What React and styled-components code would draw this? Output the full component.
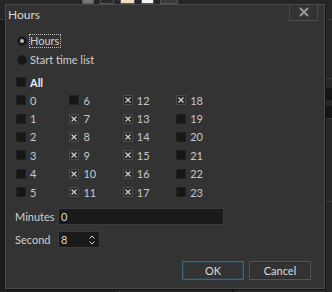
import React from "react";
import styled, { createGlobalStyle } from "styled-components";

const GlobalStyle = createGlobalStyle`
  html, body { margin: 0; padding: 0; background: #1e1e1e; overflow: hidden; }
  * { box-sizing: border-box; }
`;

const FONT = `"Segoe UI", Lato, "Liberation Sans", sans-serif`;

const Screen = styled.div`
  position: relative;
  width: 332px;
  height: 292px;
  background: #1f1f1f;
  overflow: hidden;
  font-family: ${FONT};
  display: flex;
  flex-direction: column;
`;

const Toolbar = styled.div`
  height: 20px;
  display: flex;
  align-items: flex-start;
  gap: 6px;
  padding-left: 82px;
  background: #262626;
  border-bottom: 1px solid #3a3a3a;
`;

const ToolIcon = styled.div`
  width: ${(p) => p.$w}px;
  height: 14px;
  margin-top: -10px;
  background: ${(p) => p.$c};
  border: 1px solid #555;
`;

const AppBody = styled.div`
  flex: 1;
  display: flex;
`;

const LeftPane = styled.div`
  width: 120px;
  background: #1c1c1c;
  border-right: 1px solid #333;
`;

const Spacer = styled.div`
  flex: 1;
  background: #232323;
`;

const RightPane = styled.div`
  width: 100px;
  background: #262626;
  border-left: 2px solid #111;
  display: flex;
  flex-direction: column;
  padding-top: 24px;
  color: #9aa4b0;
  font-size: 11px;
`;

const PaneLine = styled.div`
  height: ${(p) => p.$h}px;
  line-height: ${(p) => p.$h}px;
  background: ${(p) => p.$bg || "transparent"};
  border-top: ${(p) => (p.$line ? "1px solid #3a3a3a" : "none")};
  padding-left: 226px;
  white-space: nowrap;
  overflow: hidden;
`;

const Dialog = styled.div`
  position: absolute;
  left: 5px;
  top: 4px;
  width: 320px;
  height: 285px;
  background: #333333;
  border: 1px solid #4a4a4a;
  box-shadow: 1px 1px 0 #141414;
  display: flex;
  flex-direction: column;
  color: #cfcfcf;
  font-size: 11px;
`;

const TitleBar = styled.div`
  height: 18px;
  display: flex;
  justify-content: space-between;
  align-items: flex-start;
  padding-left: 2px;
`;

const Title = styled.div`
  line-height: 20px;
  font-size: 12px;
  color: #d6d6d6;
`;

const CloseButton = styled.div`
  width: 29px;
  height: 17px;
  margin-top: -1px;
  margin-right: 6px;
  border: 1px solid #4c4c4c;
  border-top: none;
  display: flex;
  align-items: center;
  justify-content: center;
`;

const Content = styled.div`
  flex: 1;
  display: flex;
  flex-direction: column;
  padding-left: 10px;
`;

const RadioGroup = styled.div`
  margin-top: 8px;
  display: flex;
  flex-direction: column;
`;

const RadioRow = styled.div`
  height: 19px;
  display: flex;
  align-items: center;
  padding-left: 1px;
`;

const RadioCircle = styled.div`
  width: 10px;
  height: 10px;
  flex: none;
  border-radius: 50%;
  background: #161616;
  border: 1px solid #222;
  display: flex;
  align-items: center;
  justify-content: center;
  &::after {
    content: "";
    display: ${(p) => (p.$on ? "block" : "none")};
    width: 4px;
    height: 4px;
    border-radius: 50%;
    background: #bcbcbc;
  }
`;

const RadioLabel = styled.span`
  margin-left: 2px;
  padding: 0 1px 0 0;
  height: 14px;
  line-height: 12px;
  border: 1px dotted ${(p) => (p.$focus ? "#bdbdbd" : "transparent")};
  color: #cfcfcf;
`;

const AllRow = styled.div`
  margin-top: 4px;
  height: 18px;
  display: flex;
  align-items: center;
  gap: 4px;
  font-weight: bold;
  color: #ececec;
`;

const HourGrid = styled.div`
  display: grid;
  grid-template-columns: repeat(4, 53.4px);
  grid-template-rows: repeat(6, 18.4px);
  grid-auto-flow: column;
`;

const HourCell = styled.div`
  display: flex;
  align-items: center;
  gap: 4px;
  color: #c3c8d0;
`;

const Box = styled.div`
  width: 10px;
  height: 10px;
  flex: none;
  background: ${(p) => (p.$on ? "#272727" : "#161616")};
  border: 1px solid ${(p) => (p.$on ? "#4a4a4a" : "#222")};
  display: flex;
  align-items: center;
  justify-content: center;
`;

const FieldRow = styled.div`
  display: flex;
  align-items: center;
  margin-top: ${(p) => p.$mt}px;
`;

const FieldLabel = styled.div`
  width: 43px;
  margin-left: -1px;
  color: #cfcfcf;
`;

const Input = styled.div`
  width: ${(p) => p.$w}px;
  height: ${(p) => p.$h}px;
  background: #1a1a1a;
  border: 1px solid #3a3a3a;
  display: flex;
  align-items: center;
  justify-content: space-between;
  padding: 0 4px 0 2px;
  color: #d8d8d8;
`;

const Spinner = styled.div`
  display: flex;
  flex-direction: column;
  gap: 2px;
`;

const Footer = styled.div`
  margin-top: auto;
  display: flex;
  justify-content: flex-end;
  gap: 5px;
  padding: 0 13px 8px 0;
`;

const Button = styled.div`
  width: 62px;
  height: 19px;
  background: #333333;
  border: 1px solid ${(p) => (p.$default ? "#3d6676" : "#565656")};
  box-shadow: inset 0 0 0 1px ${(p) => (p.$default ? "#2b4652" : "#2c2c2c")};
  display: flex;
  align-items: center;
  justify-content: center;
  color: #dcdcdc;
`;

const XMark = () => (
  <svg width="6" height="6" viewBox="0 0 6 6">
    <path d="M0.5 0.5 L5.5 5.5 M5.5 0.5 L0.5 5.5" stroke="#cfcfcf" strokeWidth="1.2" />
  </svg>
);

const CloseIcon = () => (
  <svg width="10" height="10" viewBox="0 0 10 10">
    <path d="M1 1 L9 9 M9 1 L1 9" stroke="#9a9a9a" strokeWidth="2" />
  </svg>
);

const Chevron = ({ up }) => (
  <svg width="6" height="4" viewBox="0 0 6 4">
    <path d={up ? "M0.5 3.5 L3 1 L5.5 3.5" : "M0.5 0.5 L3 3 L5.5 0.5"} stroke="#cfcfcf" strokeWidth="1" fill="none" />
  </svg>
);

const checked = new Set([7, 8, 9, 10, 11, 12, 13, 14, 15, 16, 17, 18]);

export default function App() {
  const hours = Array.from({ length: 24 }, (_, i) => i);
  return (
    <>
      <GlobalStyle />
      <Screen>
        <Toolbar>
          <ToolIcon $w={12} $c="#777" />
          <ToolIcon $w={14} $c="#2a2a2a" />
          <ToolIcon $w={15} $c="#efe0c0" />
          <ToolIcon $w={13} $c="#f4f4f4" />
          <ToolIcon $w={18} $c="#3a3a3a" />
        </Toolbar>
        <AppBody>
          <LeftPane />
          <Spacer />
          <RightPane>
            <PaneLine $h={14}>s</PaneLine>
            <PaneLine $h={20}>ic</PaneLine>
            <PaneLine $h={10} $line />
            <PaneLine $h={12} $bg="#151515" />
            <PaneLine $h={6} />
            <PaneLine $h={12} $bg="#151515" />
            <PaneLine $h={15} $line>in</PaneLine>
            <PaneLine $h={14}>im</PaneLine>
            <PaneLine $h={14}>v</PaneLine>
            <PaneLine $h={40} />
            <PaneLine $h={14} $line>in</PaneLine>
          </RightPane>
        </AppBody>
        <Dialog>
          <TitleBar>
            <Title>Hours</Title>
            <CloseButton>
              <CloseIcon />
            </CloseButton>
          </TitleBar>
          <Content>
            <RadioGroup>
              <RadioRow>
                <RadioCircle $on />
                <RadioLabel $focus>Hours</RadioLabel>
              </RadioRow>
              <RadioRow>
                <RadioCircle />
                <RadioLabel>Start time list</RadioLabel>
              </RadioRow>
            </RadioGroup>
            <AllRow>
              <Box />
              All
            </AllRow>
            <HourGrid>
              {hours.map((h) => (
                <HourCell key={h}>
                  <Box $on={checked.has(h)}>{checked.has(h) && <XMark />}</Box>
                  {h}
                </HourCell>
              ))}
            </HourGrid>
            <FieldRow $mt={7}>
              <FieldLabel>Minutes</FieldLabel>
              <Input $w={166} $h={17}>0</Input>
            </FieldRow>
            <FieldRow $mt={6}>
              <FieldLabel>Second</FieldLabel>
              <Input $w={42} $h={17}>
                8
                <Spinner>
                  <Chevron up />
                  <Chevron />
                </Spinner>
              </Input>
            </FieldRow>
          </Content>
          <Footer>
            <Button $default>OK</Button>
            <Button>Cancel</Button>
          </Footer>
        </Dialog>
      </Screen>
    </>
  );
}
